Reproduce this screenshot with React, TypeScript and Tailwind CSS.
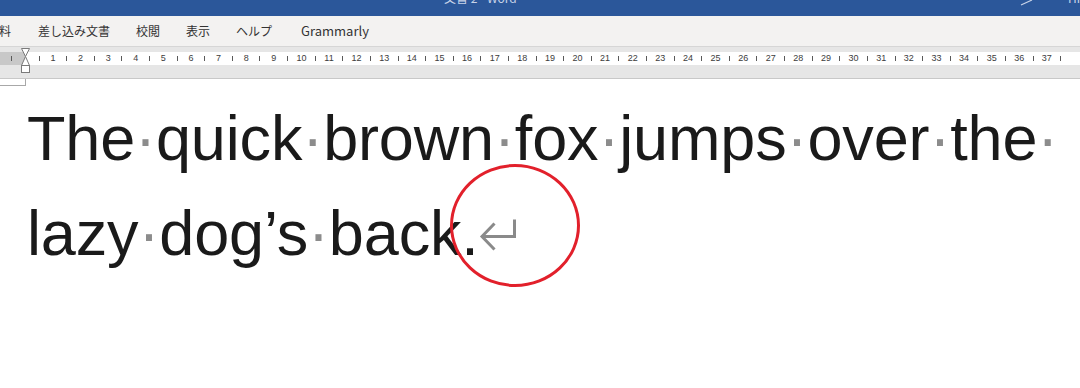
import React from 'react';

const Dot: React.FC = () => <span className="text-[#8c8c8c]">·</span>;

const Words: React.FC<{ words: string[]; trailing?: boolean }> = ({ words, trailing }) => (
  <>
    {words.map((w, i) => (
      <React.Fragment key={i}>
        {w}
        {(i < words.length - 1 || trailing) && <Dot />}
      </React.Fragment>
    ))}
  </>
);

const Ruler: React.FC = () => {
  const cells = Array.from({ length: 38 }, (_, i) => i);
  return (
    <div className="relative h-[33px] border-t border-b border-t-[#d6d6d6] border-b-[#c8c8c8] bg-[#e6e6e6] pt-[5px]">
      <div className="flex h-[13px] items-center bg-[linear-gradient(to_right,#c8c8c8_25px,#ffffff_25px)] pl-[11px]">
        {cells.map((n) => (
          <div key={n} className="flex h-full w-[27.62px] shrink-0 items-center">
            <div className="h-[5px] w-px bg-[#5a5a5a]" />
            <div className="flex-1 text-center font-['Liberation_Sans',sans-serif] text-[9px] leading-none text-[#3c3c3c]">
              {n > 0 ? n : ''}
            </div>
          </div>
        ))}
        <div className="h-[5px] w-px shrink-0 bg-[#5a5a5a]" />
      </div>
      {/* indent markers */}
      <svg className="absolute left-[21px] top-[1px]" width="9" height="26" viewBox="0 0 9 26">
        <path d="M0.5 0.5 H8.5 L4.5 8.5 Z" fill="#fff" stroke="#7a7a7a" />
        <path d="M4.5 8.5 L8.5 17.5 H0.5 Z" fill="#fff" stroke="#7a7a7a" />
        <rect x="0.5" y="17.5" width="8" height="7" fill="#fff" stroke="#7a7a7a" />
      </svg>
    </div>
  );
};

const App: React.FC = () => {
  return (
    <div className="h-[388px] w-[1080px] overflow-hidden bg-white">
      {/* title bar */}
      <div className="relative h-[16px] overflow-hidden bg-[#2b579a] text-[12px] leading-[16px] text-[#c8d3e8] font-['Noto_Sans_CJK_JP',sans-serif]">
        <div className="-mt-[10px] pl-[444px]">文書 2 - Word</div>
        <svg className="absolute left-[1020px] top-0" width="14" height="6" viewBox="0 0 14 6">
          <path d="M1 5 L12 0" stroke="#c8d3e8" strokeWidth="1.2" fill="none" />
        </svg>
        <div className="absolute left-[1068px] top-[-10px]">Hi</div>
      </div>

      {/* ribbon tabs */}
      <div className="flex h-[30px] items-center gap-[26px] bg-[#f3f2f1] text-[12px] text-[#333333] font-['Noto_Sans_CJK_JP',sans-serif]">
        <span className="-ml-[1px]">料</span>
        <span className="ml-[1px]">差し込み文書</span>
        <span>校閲</span>
        <span>表示</span>
        <span>ヘルプ</span>
        <span className="ml-[3px] text-[13px]">Grammarly</span>
      </div>

      <Ruler />

      {/* document body */}
      <div className="relative pl-[27px] pt-[12px] font-['Liberation_Sans',Arial,sans-serif] text-[63px] leading-[95px] tracking-[-0.15px] text-[#1a1a1a]">
        <div className="absolute left-0 top-0 h-[7px] w-[26px] border-r border-b border-[#a8a8a8]" />
        <div className="whitespace-nowrap">
          <Words words={['The', 'quick', 'brown', 'fox', 'jumps', 'over', 'the']} trailing />
        </div>
        <div className="whitespace-nowrap">
          <Words words={['lazy', 'dog’s', 'back.']} />
          <svg className="inline-block" width="40" height="40" viewBox="0 0 40 40">
            <path
              d="M35.5 1.5 V18.5 H3 M15.5 5.5 L3 18.5 L15.5 31.5"
              stroke="#8a8a8a"
              strokeWidth="3"
              fill="none"
            />
          </svg>
        </div>
        {/* red annotation circle */}
        <div className="absolute left-[450px] top-[85px] h-[123px] w-[130px] rounded-[50%] border-[3.5px] border-[#e2202b]" />
      </div>
    </div>
  );
};

export default App;
